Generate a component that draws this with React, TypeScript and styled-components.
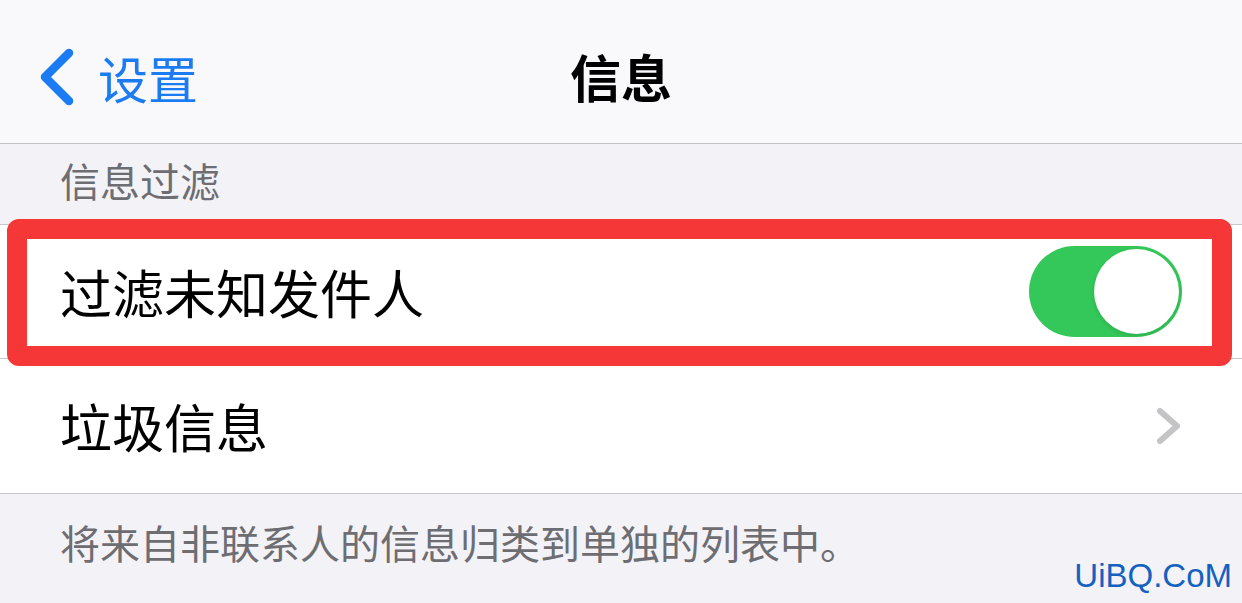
import styled, { createGlobalStyle } from 'styled-components';

const GlobalStyle = createGlobalStyle`
    html, body {
        margin: 0;
        padding: 0;
        background: #f2f2f7;
    }
    body {
        font-family: "Noto Sans CJK SC", "Noto Sans", sans-serif;
    }
`;

const Page = styled.div`
    width: 1242px;
    height: 603px;
    position: relative;
    overflow: hidden;
    background: #f2f2f7;
`;

const NavBar = styled.div`
    height: 144px;
    box-sizing: border-box;
    padding-top: 10px;
    display: grid;
    grid-template-columns: 1fr auto 1fr;
    align-items: center;
    background: #f9f9fb;
    border-bottom: 1px solid #c3c3c6;
`;

const BackButton = styled.div`
    display: flex;
    align-items: center;
    gap: 24px;
    padding-left: 38px;
    color: #1a7bf2;
    font-size: 50px;
    line-height: 1;
`;

const Title = styled.div`
    font-size: 51px;
    font-weight: 700;
    color: #000;
    line-height: 1;
`;

const SectionHeader = styled.div`
    height: 80px;
    box-sizing: border-box;
    padding: 12px 0 0 60px;
    font-size: 40px;
    line-height: 1.2;
    color: #6d6d72;
`;

const Group = styled.div`
    background: #fff;
    border-top: 1px solid #c8c8cc;
    border-bottom: 1px solid #c8c8cc;
`;

const Row = styled.div<{ $last?: boolean }>`
    position: relative;
    height: 134px;
    display: flex;
    align-items: center;
    justify-content: space-between;
    padding: 0 60px;
    box-sizing: border-box;
    border-bottom: ${p => (p.$last ? 'none' : '1px solid #c8c8cc')};
`;

const Label = styled.span`
    font-size: 52px;
    line-height: 1;
    color: #000;
`;

const Highlight = styled.div`
    position: absolute;
    left: 7px;
    right: 10px;
    top: -6px;
    bottom: -8px;
    border: 20px solid #f63737;
    border-radius: 12px;
    pointer-events: none;
`;

const Switch = styled.div`
    width: 153px;
    height: 91px;
    border-radius: 46px;
    background: #34c759;
    display: flex;
    align-items: center;
    justify-content: flex-end;
    padding: 3px;
    box-sizing: border-box;
`;

const Knob = styled.div`
    width: 85px;
    height: 85px;
    border-radius: 50%;
    background: #fff;
    box-shadow: 0 2px 4px rgba(0, 0, 0, 0.12);
`;

const Footer = styled.div`
    padding: 24px 0 0 60px;
    font-size: 40px;
    line-height: 1.2;
    color: #6d6d72;
`;

const Watermark = styled.div`
    position: absolute;
    right: 10px;
    bottom: 8px;
    font-family: "Liberation Sans", Arial, sans-serif;
    font-size: 33px;
    color: #1461c0;
`;

export default function App() {
    return (
        <Page>
            <GlobalStyle />
            <NavBar>
                <BackButton>
                    <svg width="36" height="58" viewBox="0 0 36 58">
                        <path d="M31 5 L7 29 L31 53" fill="none" stroke="#1a7bf2" strokeWidth="8.5" strokeLinecap="round" strokeLinejoin="round" />
                    </svg>
                    <span>设置</span>
                </BackButton>
                <Title>信息</Title>
                <div />
            </NavBar>
            <SectionHeader>信息过滤</SectionHeader>
            <Group>
                <Row>
                    <Label>过滤未知发件人</Label>
                    <Switch>
                        <Knob />
                    </Switch>
                    <Highlight />
                </Row>
                <Row $last>
                    <Label>垃圾信息</Label>
                    <svg width="26" height="38" viewBox="0 0 26 38">
                        <path d="M4 4 L21 19 L4 34" fill="none" stroke="#c4c4c7" strokeWidth="6" strokeLinecap="round" strokeLinejoin="round" />
                    </svg>
                </Row>
            </Group>
            <Footer>将来自非联系人的信息归类到单独的列表中。</Footer>
            <Watermark>UiBQ.CoM</Watermark>
        </Page>
    );
}
